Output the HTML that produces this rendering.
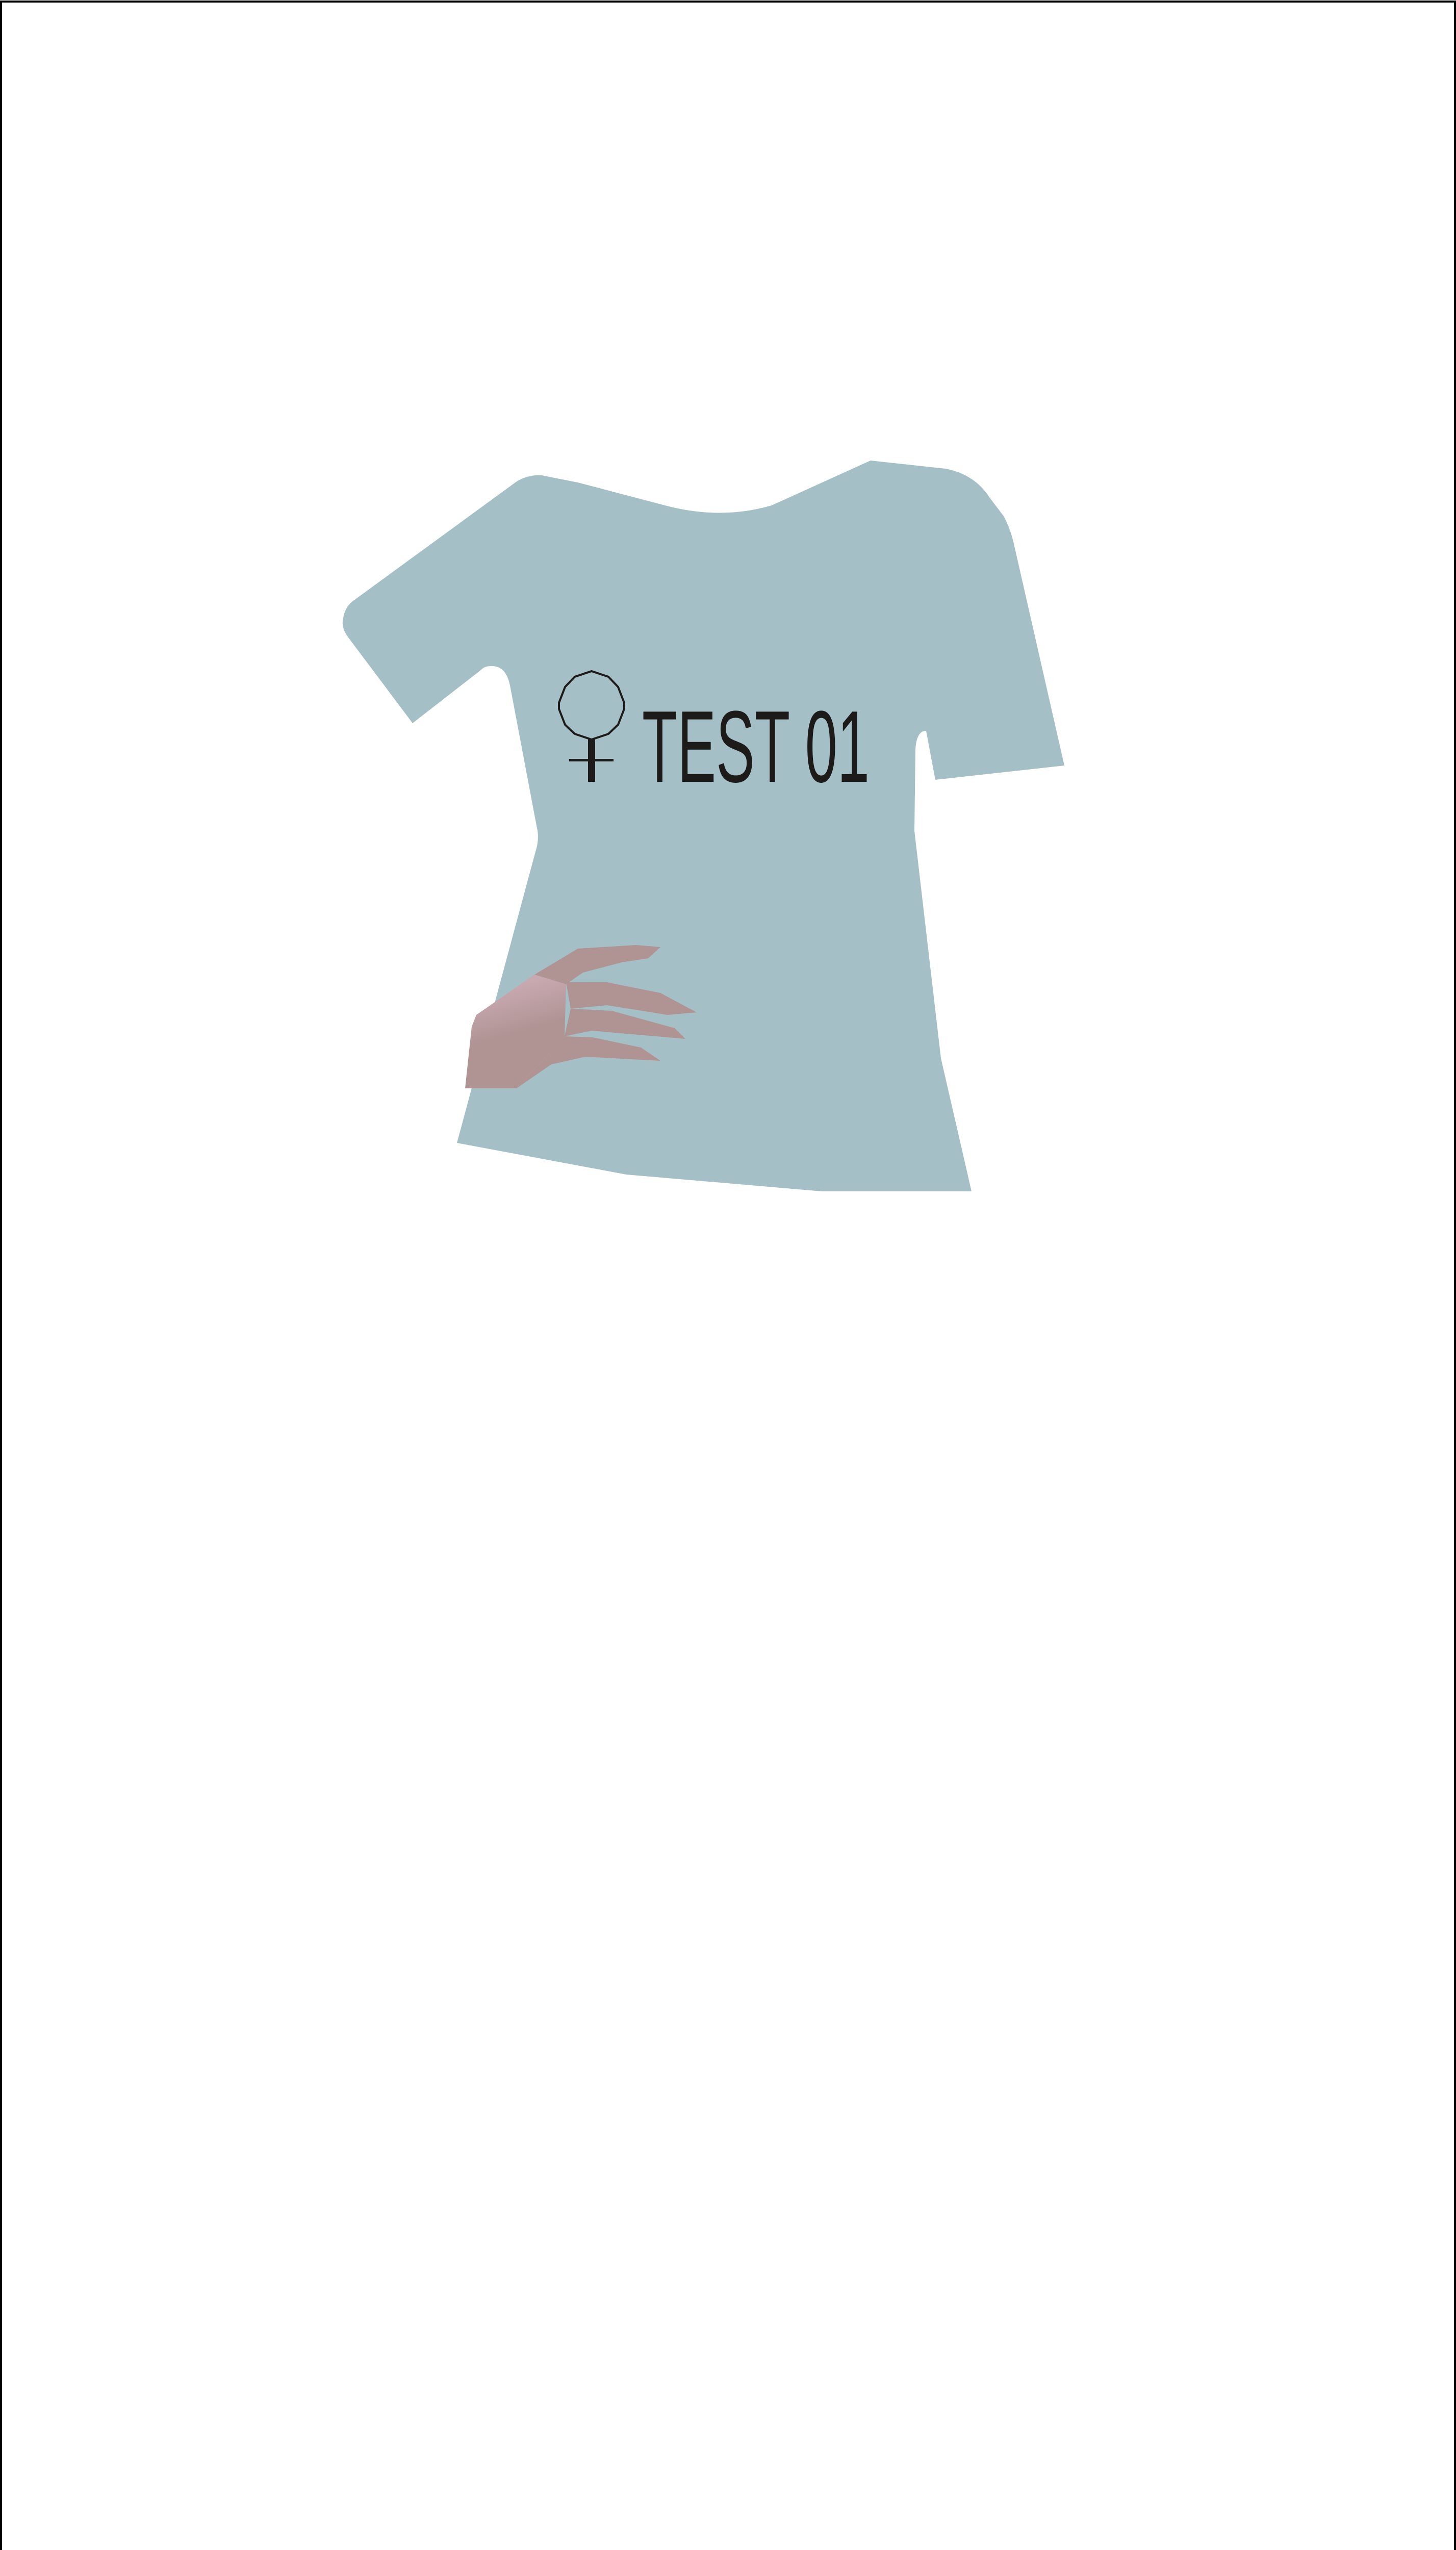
<!DOCTYPE html>
<html><head><meta charset="utf-8"><style>
html,body{margin:0;padding:0;background:#fff;width:2855px;height:5343px;overflow:hidden;}
body{position:relative;}
.frame{position:absolute;left:0;top:1px;width:2847px;height:5333px;border:4px solid #000;}
svg{position:absolute;left:0;top:0;display:block;}
.t{font-family:"Liberation Sans",Arial,sans-serif;}
</style></head><body>
<div class="frame"></div>
<svg width="2855" height="5343" viewBox="0 0 2855 5343">
<defs>
<linearGradient id="palm" x1="0" y1="0" x2="0.25" y2="1">
<stop offset="0.2" stop-color="#c8a9b1"/>
<stop offset="0.6" stop-color="#b09494"/>
</linearGradient>
</defs>
<path fill="#a4bfc5" d="M1062,932 L1133,946 L1304,991 Q1413,1020 1513,991 L1707,903 L1854,919 Q1911,930 1940,975 L1968,1012 Q1983,1040 1990,1075 L2087,1501 L1834,1529 L1816,1433 Q1797,1433 1795,1470 L1793,1629 L1845,2075 L1905,2336 L1612,2336 L1228,2303 L896,2241 L1050,1670 Q1058,1645 1053,1624 L1000,1344 Q992,1305 963,1306 Q950,1306 944,1313 L809,1418 L683,1250 Q668,1230 673,1212 Q676,1192 690,1180 L1005,950 Q1030,930 1062,932 Z"/>
<g fill="#b09494">
<polygon points="1048,1911 1133,1860 1247,1853 1295,1857 1271,1879 1219,1887 1143,1907 1110,1930"/>
<polygon points="1110,1926 1190,1926 1295,1947 1366,1985 1309,1990 1190,1971 1119,1978"/>
<polygon points="1119,1978 1200,1982 1323,2016 1344,2037 1160,2021 1107,2032"/>
<polygon points="1107,2032 1162,2034 1257,2054 1295,2080 1148,2072 1081,2087 1013,2134"/>
</g>
<polygon fill="url(#palm)" points="912,2134 925,2013 934,1990 1048,1911 1110,1930 1107,2032 1013,2134"/>
<polygon fill="none" stroke="#1d1b19" stroke-width="4" points="1160,1316 1193,1327 1212,1347 1224,1378 1224,1390 1212,1421 1193,1439 1160,1450 1127,1439 1108,1421 1096,1390 1096,1378 1108,1347 1127,1327"/>
<rect x="1153" y="1450" width="14" height="83" fill="#1d1b19"/>
<rect x="1116" y="1488" width="87" height="5" fill="#1d1b19"/>
<text class="t" x="1259" y="1533" font-size="200" fill="#1d1b19" textLength="446" lengthAdjust="spacingAndGlyphs">TEST 01</text>
</svg>
</body></html>
